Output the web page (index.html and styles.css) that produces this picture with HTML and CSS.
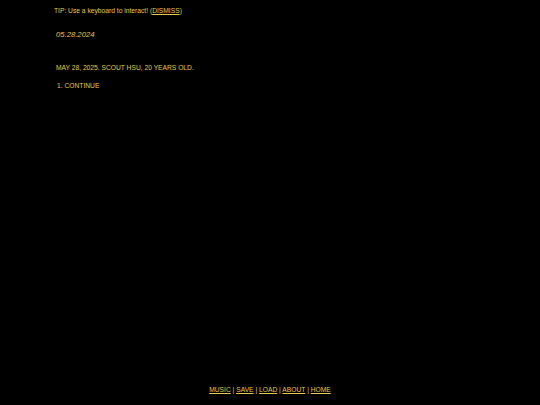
FILE: index.html
```html
<!DOCTYPE html>
<html>
<head>
<meta charset="utf-8">
<link rel="stylesheet" href="styles.css">
</head>
<body>
<div class="page">
  <div class="tip">TIP: Use a keyboard to interact! (<a href="#" class="link">DISMISS</a>)</div>
  <div class="story">
    <div class="date">05.28.2024</div>
    <p class="line">MAY 28, 2025. SCOUT HSU, 20 YEARS OLD.</p>
    <div class="choices">
      <div class="choice">1. CONTINUE</div>
    </div>
  </div>
  <div class="footer">
    <a href="#" class="link">MUSIC</a> | <a href="#" class="link">SAVE</a> | <a href="#" class="link">LOAD</a> | <a href="#" class="link">ABOUT</a> | <a href="#" class="link">HOME</a>
  </div>
</div>
</body>
</html>
```
FILE: styles.css
```css
html, body {
  margin: 0;
  padding: 0;
  background: #000;
}
body {
  font-family: "Liberation Sans", Arial, sans-serif;
  color: #e4c94a;
  font-size: 6.7px;
}
.page {
  width: 540px;
  height: 405px;
  display: flex;
  flex-direction: column;
}
.tip {
  padding: 6px 0 0 54px;
  line-height: 9px;
}
.link {
  color: #e4c94a;
  text-decoration: underline;
}
.story {
  padding-left: 56px;
  flex: 1;
}
.date {
  margin-top: 15px;
  font-style: italic;
  font-size: 7.7px;
  line-height: 10px;
}
.line {
  margin: 23px 0 0 0;
  line-height: 9px;
}
.choices {
  margin: 9px 0 0 0;
  padding: 0 0 0 1px;
  line-height: 9px;
}
.footer {
  text-align: center;
  padding-bottom: 11px;
  line-height: 9px;
}
```
